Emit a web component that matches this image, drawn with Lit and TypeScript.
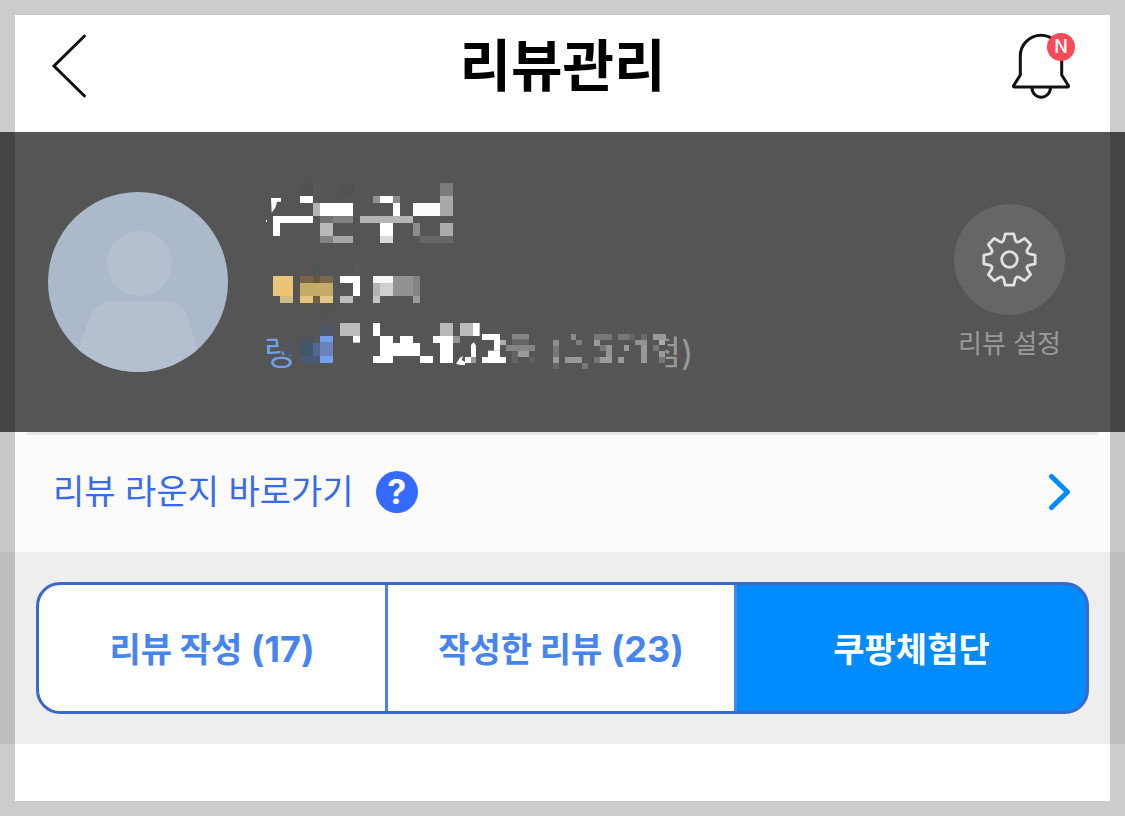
import { LitElement, html, svg, css } from "lit";
import { customElement, state } from "lit/decorators.js";
import { classMap } from "lit/directives/class-map.js";

type Block = [number, number, number, number, string];

// Censor blocks over the profile text, in thirds of a pixel: x, y, width, height, fill.
const NAME_BLOCKS: Block[] = [
  [135, 24, 39, 39, "#525252"], [174, 24, 21, 39, "#595959"], [255, 24, 40, 39, "#535353"],
  [555, 24, 39, 39, "#7b7b7b"], [135, 63, 39, 21, "#fff"],
  [354, 63, 21, 21, "#919191"], [375, 63, 39, 21, "#fff"], [414, 63, 21, 21, "#8c8c8c"],
  [555, 63, 39, 60, "#a8a8a8"],
  [174, 84, 21, 39, "#b3b3b3"], [195, 84, 99, 39, "#fff"], [414, 84, 21, 39, "#fff"],
  [474, 84, 81, 39, "#fcfcfc"], [54, 123, 120, 21, "#fff"], [54, 144, 21, 39, "#fff"],
  [195, 123, 39, 21, "#727272"], [234, 123, 60, 21, "#808080"],
  [315, 123, 159, 21, "#b5b5b5"], [195, 144, 39, 39, "#b9b9b9"],
  [375, 144, 39, 39, "#fff"], [474, 144, 21, 39, "#8c8c8c"], [555, 144, 39, 39, "#aaa"],
  [195, 183, 39, 21, "#838383"], [234, 183, 60, 21, "#a6a6a6"],
  [375, 183, 39, 21, "#dadada"], [474, 183, 21, 21, "#585858"], [495, 183, 99, 21, "#666"],
];

const BADGE_BLOCKS: Block[] = [
  [135, 264, 39, 39, "#595453"], [174, 264, 21, 39, "#525553"], [295, 264, 20, 39, "#595959"],
  [54, 303, 60, 60, "#e7c47b"], [75, 324, 39, 39, "#ecc474"], [75, 363, 39, 21, "#cfbb83"],
  [135, 303, 39, 21, "#7b6444"], [174, 303, 21, 21, "#64583c"], [195, 303, 39, 21, "#7b6848"],
  [135, 324, 99, 39, "#c5aa68"], [135, 363, 39, 21, "#e4c37b"], [174, 363, 21, 21, "#6e6040"],
  [195, 363, 39, 21, "#e4c784"], [135, 384, 39, 36, "#56554f"], [195, 384, 39, 36, "#555450"],
  [255, 303, 60, 21, "#fff"], [294, 324, 21, 39, "#fff"], [255, 363, 39, 21, "#bdbdbd"],
  [354, 303, 60, 21, "#f6f6f6"], [354, 324, 21, 39, "#b3b3b3"], [375, 324, 39, 39, "#d0d0d0"],
  [354, 363, 21, 21, "#c4c4c4"], [414, 303, 60, 60, "#929292"], [474, 303, 21, 60, "#838383"],
  [474, 363, 21, 21, "#9c9c9c"],
];

const RANK_BLOCKS: Block[] = [
  [96, 503, 18, 38, "#4c5665"], [135, 484, 39, 19, "#4f5560"], [135, 503, 39, 40, "#44566a"],
  [135, 543, 39, 21, "#4a5876"], [174, 503, 21, 40, "#526791"], [174, 543, 21, 21, "#4b587a"],
  [195, 444, 39, 39, "#4d5669"], [195, 483, 39, 20, "#6f9fed"], [195, 503, 39, 40, "#6b82bd"],
  [195, 543, 39, 21, "#71a2ef"],
  [255, 444, 60, 39, "#bbb"], [294, 483, 21, 20, "#fff"],
  [354, 444, 21, 39, "#fff"], [375, 483, 39, 21, "#fff"], [435, 483, 39, 21, "#fff"],
  [375, 504, 120, 39, "#fff"], [354, 543, 60, 21, "#fff"], [495, 543, 39, 21, "#fff"],
  [555, 444, 39, 39, "#b9b9b9"], [534, 483, 60, 21, "#fff"], [594, 483, 21, 21, "#949494"],
  [555, 504, 39, 60, "#fff"], [615, 444, 39, 39, "#bbb"], [654, 444, 20, 39, "#fff"],
  [681, 477, 54, 18, "#fff"], [717, 495, 18, 18, "#fff"], [735, 495, 18, 15, "#adadad"],
  [717, 509, 18, 18, "#fff"], [699, 527, 36, 19, "#fff"], [681, 546, 72, 18, "#fff"],
  [648, 510, 15, 36, "#fff"], [648, 546, 15, 18, "#999"], [630, 546, 18, 18, "#f5f5f5"],
  [771, 477, 51, 17, "#858585"], [753, 510, 87, 18, "#858585"], [789, 528, 33, 18, "#9a9a9a"],
  [771, 494, 51, 16, "#666"], [771, 528, 18, 36, "#646464"], [822, 546, 18, 18, "#606060"],
  [894, 495, 18, 18, "#8d8d8d"], [894, 513, 18, 33, "#777"], [894, 546, 18, 18, "#9c9c9c"],
  [894, 564, 18, 18, "#666"], [948, 477, 15, 18, "#8b8b8b"], [963, 495, 18, 15, "#7f7f7f"],
  [930, 546, 51, 18, "#999"], [981, 564, 18, 18, "#777"],
  [1017, 477, 54, 18, "#777"], [1017, 495, 18, 18, "#999"], [1053, 510, 18, 36, "#959595"],
  [1035, 510, 18, 18, "#777"], [1017, 546, 18, 18, "#777"], [1035, 546, 36, 18, "#9a9a9a"],
  [1089, 477, 33, 18, "#777"], [1122, 477, 18, 18, "#666"], [1107, 510, 15, 18, "#9a9a9a"],
  [1089, 546, 18, 18, "#9a9a9a"], [1140, 495, 36, 15, "#929292"], [1158, 510, 18, 54, "#999"],
  [1158, 477, 18, 18, "#6b6b6b"],
  [1194, 477, 39, 18, "#999"], [1212, 495, 18, 15, "#aaa"], [1194, 510, 18, 18, "#777"],
  [1212, 528, 18, 18, "#999"], [1212, 546, 18, 18, "#777"],
];

const blocks = (list: Block[]) =>
  list.map(([x, y, w, h, fill]) => svg`<rect x=${x} y=${y} width=${w} height=${h} fill=${fill}></rect>`);

function gearPath(): string {
  const at = (r: number, deg: number) => {
    const a = ((deg - 90) * Math.PI) / 180;
    return `${(30 + r * Math.cos(a)).toFixed(2)} ${(30 + r * Math.sin(a)).toFixed(2)}`;
  };
  let d = "";
  for (let k = 0; k < 8; k++) {
    const c = k * 45;
    d += `${k ? "L" : "M"}${at(26, c - 9.5)} L${at(26, c + 9.5)} L${at(20.6, c + 16)} Q${at(17.6, c + 22.5)} ${at(20.6, c + 29)} `;
  }
  return d + "Z";
}

interface Tab {
  label: string;
  count?: number;
}

@customElement("app-root")
export class AppRoot extends LitElement {
  static styles = css`
    :host {
      display: block;
      font-family: "Inter", "Noto Sans CJK KR", sans-serif;
    }
    * { box-sizing: border-box; }
    button { margin: 0; padding: 0; border: 0; background: none; font: inherit; cursor: pointer; }
    svg { display: block; flex: none; }
    .page { position: relative; min-height: 100vh; background: #fff; }
    .page::after {
      content: "";
      position: absolute;
      inset: 0;
      border: 15px solid rgba(0, 0, 0, 0.2);
      pointer-events: none;
    }
    .header {
      display: grid;
      grid-template-columns: 1fr auto 1fr;
      align-items: center;
      height: 132px;
      padding: 0 48px;
    }
    .title { margin: 0; font-size: 56px; line-height: 80px; font-weight: 700; color: #000; }
    .bell { position: relative; justify-self: end; }
    .new {
      position: absolute;
      top: 0;
      right: 2px;
      width: 28px;
      height: 28px;
      border-radius: 50%;
      background: #f84b57;
      color: #fff;
      font-size: 18px;
      line-height: 28px;
      font-weight: 500;
      text-align: center;
    }
    .profile {
      display: flex;
      align-items: center;
      height: 300px;
      padding: 0 60px 0 48px;
      background: #555;
    }
    .info { margin-left: 27px; }
    .rank { font-size: 102px; fill: #6f9fe8; }
    .score { font-size: 102px; fill: #999; }
    .settings {
      display: flex;
      flex-direction: column;
      align-items: center;
      gap: 9px;
      margin-left: auto;
      padding-top: 4px;
      color: #999;
      font-size: 26px;
      line-height: 40px;
    }
    .disc {
      display: grid;
      place-items: center;
      width: 111px;
      height: 111px;
      border-radius: 50%;
      background: #666;
    }
    .lounge {
      display: flex;
      align-items: center;
      height: 120px;
      padding: 0 54px 0 53px;
      background: linear-gradient(#e6e6e6, #e6e6e6) center top / calc(100% - 54px) 3px no-repeat #fbfbfb;
    }
    .link { color: #386af0; font-size: 34px; line-height: 50px; text-decoration: none; }
    .help {
      width: 42px;
      height: 42px;
      margin-left: 22px;
      border-radius: 50%;
      background: #346aff;
      color: #fff;
      font-size: 34px;
      line-height: 42px;
      font-weight: 700;
    }
    .go { margin-left: auto; }
    .band { padding: 30px 36px; background: #eee; }
    .tabs {
      display: grid;
      grid-template-columns: repeat(3, 1fr);
      height: 132px;
      border: 3px solid #3b68cc;
      border-radius: 24px;
      overflow: hidden;
      background: #3b68cc;
    }
    .tab {
      border-right: 3px solid #4a84e4;
      background: #fff;
      color: #4685f0;
      font-family: "Noto Sans CJK KR", sans-serif;
      font-size: 34px;
      line-height: 48px;
      font-weight: 700;
    }
    .tab:last-child { border-right: 0; }
    .count { font-family: "Inter", sans-serif; font-size: 36px; white-space: pre; }
    .active { background: #008cff; color: #fff; }
  `;

  @state() private selected = 2;

  private tabs: Tab[] = [
    { label: "리뷰 작성", count: 17 },
    { label: "작성한 리뷰", count: 23 },
    { label: "쿠팡체험단" },
  ];

  render() {
    return html`
      <main class="page">
        <header class="header">
          <button class="back" aria-label="뒤로">
            <svg width="42" height="66" viewBox="0 0 42 66" fill="none" stroke="#111" stroke-width="3" stroke-linecap="round">
              <path d="M36.5 3L6 33L36.500 63"></path>
            </svg>
          </button>
          <h1 class="title">리뷰관리</h1>
          <button class="bell" aria-label="알림">
            <svg width="70" height="66" viewBox="1007 33 70 66" fill="none" stroke="#111" stroke-width="3" stroke-linejoin="round">
              <path d="M1020.300 75V56A20.700 20.700 0 0 1 1061.700 56V75L1068.300 85.500Q1069 87 1067.500 87H1014.500Q1013 87 1013.700 85.500Z"></path>
              <path d="M1032 88A9.200 9.200 0 0 0 1050.400 88"></path>
            </svg>
            <span class="new">N</span>
          </button>
        </header>

        <section class="profile">
          <svg width="180" height="180" viewBox="0 0 180 180" aria-hidden="true">
            <defs><clipPath id="round"><circle cx="90" cy="90" r="90"></circle></clipPath></defs>
            <g clip-path="url(#round)">
              <rect width="180" height="180" fill="#acb9cb"></rect>
              <circle cx="91.500" cy="71.500" r="32.500" fill="#b4c0d0"></circle>
              <path d="M28 164L41 128Q47 109 65 109H118Q134 109 140 126L151 164V180H28Z" fill="#b4c0d0"></path>
            </g>
          </svg>
          <svg class="info" width="445" height="214" viewBox="0 0 1335 642">
            <path d="M48 69H78V80H66L61 98L50 113Z M33 135H36V141H33Z" fill="#fff"></path>
            ${blocks(NAME_BLOCKS)}
            ${blocks(BADGE_BLOCKS)}
            <text class="rank" x="27" y="570">랭</text>
            <path d="M62 470H135V590H114V541H92L72 514Z" fill="#555"></path>
            <text class="score" x="1184" y="570">점)</text>
            <path d="M1180 470H1232V600H1180Z" fill="#555"></path>
            ${blocks(RANK_BLOCKS)}
            <path d="M603 566L615 548L624 543L620 555L630 560V570H615Z M648 510L656 502L662 510Z" fill="#fff"></path>
          </svg>
          <button class="settings">
            <span class="disc">
              <svg width="59" height="59" viewBox="0.5 0.5 59 59" fill="none" stroke="#e0e0e0" stroke-width="2.800" stroke-linejoin="round">
                <path d=${gearPath()}></path>
                <circle cx="30" cy="30" r="7.800"></circle>
              </svg>
            </span>
            리뷰 설정
          </button>
        </section>

        <section class="lounge">
          <a class="link" href="#lounge">리뷰 라운지 바로가기</a>
          <button class="help" aria-label="도움말">?</button>
          <svg class="go" width="24" height="40" viewBox="0 0 24 40" fill="none" stroke="#008cff" stroke-width="5" stroke-linecap="round" stroke-linejoin="round">
            <path d="M4.500 4.500L20.500 20L4.500 35.500"></path>
          </svg>
        </section>

        <section class="band">
          <nav class="tabs">
            ${this.tabs.map(
              (tab, i) => html`<button
                class=${classMap({ tab: true, active: i === this.selected })}
                @click=${() => (this.selected = i)}
              >${tab.label}${tab.count ? html`<span class="count"> (${tab.count})</span>` : ""}</button>`
            )}
          </nav>
        </section>
      </main>
    `;
  }
}
